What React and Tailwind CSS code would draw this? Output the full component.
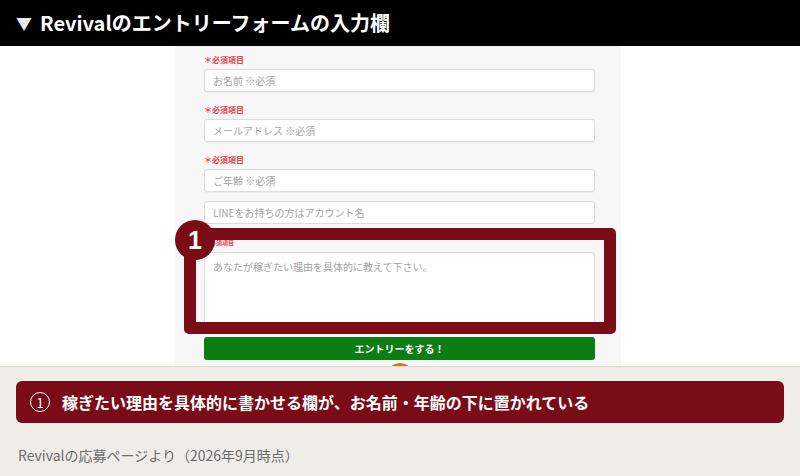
import React from 'react';

const jp = { fontFamily: '"Noto Sans CJK JP", "Noto Sans", sans-serif' };

function Field({ label, placeholder }) {
  return (
    <div className="mb-[13px]">
      {label && (
        <div className="h-[10px] leading-[10px] text-[8px] font-bold text-[#e2464d] mb-[4px]">＊必須項目</div>
      )}
      <div className="h-[23px] bg-white border border-[#dcdcdc] rounded-[3px] shadow-[0_1px_1px_rgba(0,0,0,0.04)] flex items-center px-[8px] text-[10px] text-[#a3a3a3]">
        {placeholder}
      </div>
    </div>
  );
}

export default function App() {
  return (
    <div className="w-[800px] h-[476px] flex flex-col overflow-hidden bg-white" style={jp}>
      {/* 見出し */}
      <div className="h-[46px] bg-black flex items-center px-[16px] text-white font-bold text-[20px]">
        <span className="text-[16px] mr-[8px] text-[#e8e8e8]">▼</span>
        <span>Revivalのエントリーフォームの入力欄</span>
      </div>

      {/* フォームのスクリーンショット部分 */}
      <div className="h-[320px] bg-white">
        <div className="relative ml-[175px] w-[446px] h-full bg-[#f7f7f7] pl-[29px] pr-[26px] pt-[9px] overflow-hidden">
          <Field label placeholder="お名前 ※必須" />
          <Field label placeholder="メールアドレス ※必須" />
          <Field label placeholder="ご年齢 ※必須" />
          <div className="-mt-[4px]">
            <div className="h-[23px] bg-white border border-[#dcdcdc] rounded-[3px] flex items-center px-[8px] text-[10px] text-[#a3a3a3]">
              LINEをお持ちの方はアカウント名
            </div>
          </div>
          <div className="h-[10px] leading-[10px] text-[6px] font-bold text-[#e2464d] mt-[14px] mb-[4px]">＊必須項目</div>
          <div className="h-[80px] bg-white border border-[#dcdcdc] rounded-[3px] px-[8px] pt-[6px] text-[10px] text-[#a3a3a3]">
            あなたが稼ぎたい理由を具体的に教えて下さい。
          </div>
          <div className="mt-[5px] h-[23px] bg-[#0b7d12] rounded-[3px] flex items-center justify-center text-white text-[10px] font-bold">
            エントリーをする！
          </div>
          <div className="mx-auto mt-[3px] w-[26px] h-[26px] rounded-full bg-[#f0a21e] border-t-[3px] border-[#d8731a]" />

          {/* 強調枠 */}
          <div className="absolute left-[9px] top-[182px] w-[432px] h-[106px] border-[12px] border-[#7a0c17] rounded-[5px]" />
          <div className="absolute left-[0px] top-[174px] w-[40px] h-[40px] rounded-full bg-[#7a0c17] flex items-center justify-center text-white font-bold text-[25px] leading-none" style={{ fontFamily: '"Liberation Sans", sans-serif' }}>
            1
          </div>
        </div>
      </div>

      {/* 説明 */}
      <div className="flex-1 bg-[#efede8] border-t border-[#e0dbd2] px-[16px] pt-[14px]">
        <div className="h-[42px] bg-[#7a0c17] rounded-[6px] flex items-center pl-[14px] text-white font-bold text-[16px]">
          <span className="w-[20px] h-[20px] rounded-full border-[1.5px] border-white flex items-center justify-center text-[13px] font-normal leading-none mr-[12px]">1</span>
          <span>稼ぎたい理由を具体的に書かせる欄が、お名前・年齢の下に置かれている</span>
        </div>
        <div className="mt-[22px] text-[14px] text-[#6b6b6b] leading-[20px] pl-[2px]">
          Revivalの応募ページより（2026年9月時点）
        </div>
      </div>
    </div>
  );
}
